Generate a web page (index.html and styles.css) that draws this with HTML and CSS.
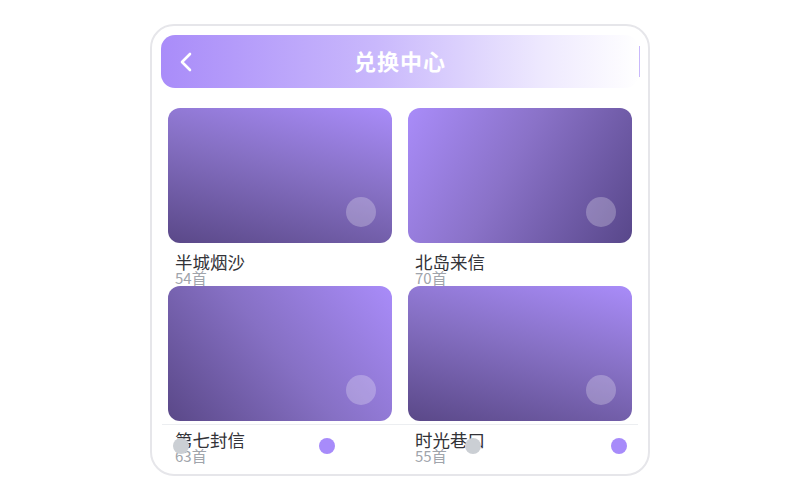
FILE: index.html
```html
<!DOCTYPE html>
<html lang="zh-CN">
<head>
    <meta charset="UTF-8">
    <meta name="viewport" content="width=device-width, initial-scale=1.0">
    <title>兑换中心</title>
    <link rel="stylesheet" href="styles.css">
</head>
<body>
    <div class="phone">
        <!-- Header -->
        <div class="header">
            <svg class="back" width="14" height="20" viewBox="0 0 14 20">
                <path d="M11 2 L3 10 L11 18" fill="none" stroke="#fff" stroke-width="2.6" stroke-linecap="round" stroke-linejoin="round"/>
            </svg>
            <h1>兑换中心</h1>
            <span class="edge"></span>
        </div>

        <!-- Album grid -->
        <div class="grid">
            <div class="item">
                <div class="cover cover-a"><span class="dot"></span></div>
                <div class="name">半城烟沙</div>
                <div class="count">54首</div>
            </div>
            <div class="item">
                <div class="cover cover-b"><span class="dot"></span></div>
                <div class="name">北岛来信</div>
                <div class="count">70首</div>
            </div>
            <div class="item">
                <div class="cover cover-c"><span class="dot"></span></div>
                <div class="name">第七封信</div>
                <div class="count">63首</div>
            </div>
            <div class="item">
                <div class="cover cover-a"><span class="dot"></span></div>
                <div class="name">时光巷口</div>
                <div class="count">55首</div>
            </div>
        </div>

        <!-- Bottom bar -->
        <div class="tabbar">
            <span class="tab gray"></span>
            <span class="tab purple"></span>
            <span class="tab gray"></span>
            <span class="tab purple"></span>
        </div>
    </div>
</body>
</html>
```

FILE: styles.css
```css
/* General */
body {
    margin: 0;
    padding: 24px 0;
    background: #fff;
    font-family: "Noto Sans CJK SC", "Noto Sans", sans-serif;
    display: flex;
    justify-content: center;
}
.phone {
    position: relative;
    width: 500px;
    height: 452px;
    box-sizing: border-box;
    border: 2px solid #e6e6ea;
    border-radius: 24px;
    padding: 9px 9px 0;
    overflow: hidden;
}

/* Header */
.header {
    position: relative;
    height: 53px;
    border-radius: 14px;
    background: linear-gradient(90deg, #a98cf9 0%, #c9b8fc 45%, #eee9fe 80%, #ffffff 100%);
    display: flex;
    align-items: center;
    justify-content: center;
}
.back {
    position: absolute;
    left: 18px;
    top: 17px;
}
.header h1 {
    margin: 0 0 4px;
    color: #fff;
    font-size: 22px;
    font-weight: 700;
    line-height: 24px;
    letter-spacing: 1px;
}
.edge {
    position: absolute;
    right: -1px;
    top: 11px;
    width: 1px;
    height: 31px;
    background: #c9b9fb;
}

/* Grid */
.grid {
    display: grid;
    grid-template-columns: 224px 224px;
    grid-auto-rows: 178px;
    column-gap: 16px;
    margin-top: 20px;
    padding: 0 7px;
}
.cover {
    position: relative;
    height: 135px;
    border-radius: 12px;
}
.cover-a {
    background: linear-gradient(15deg, #5a4888 0%, #8670c4 55%, #a98cf9 100%);
}
.cover-b {
    background: linear-gradient(120deg, #a98cf9 0%, #8a72c8 45%, #58478a 100%);
}
.cover-c {
    background: linear-gradient(50deg, #5a4888 0%, #8670c4 50%, #a98cf9 100%);
}
.dot {
    position: absolute;
    right: 16px;
    bottom: 16px;
    width: 30px;
    height: 30px;
    border-radius: 50%;
    background: rgba(255, 255, 255, 0.25);
}
.name {
    margin-top: 9px;
    padding-left: 7px;
    font-size: 17.5px;
    line-height: 19px;
    color: #333338;
}
.count {
    margin-top: -1px;
    padding-left: 7px;
    font-size: 15px;
    line-height: 15px;
    color: #a0a4ab;
}

/* Bottom bar */
.tabbar {
    position: absolute;
    left: 10px;
    right: 10px;
    top: 398px;
    height: 44px;
    border-top: 1px solid #eceef1;
    display: flex;
    justify-content: space-between;
    align-items: flex-start;
    padding: 13px 11px 0 11px;
}
.tab {
    width: 16px;
    height: 16px;
    border-radius: 50%;
}
.tab.gray {
    background: #cbcfd4;
}
.tab.purple {
    background: #a78bfa;
}
```
